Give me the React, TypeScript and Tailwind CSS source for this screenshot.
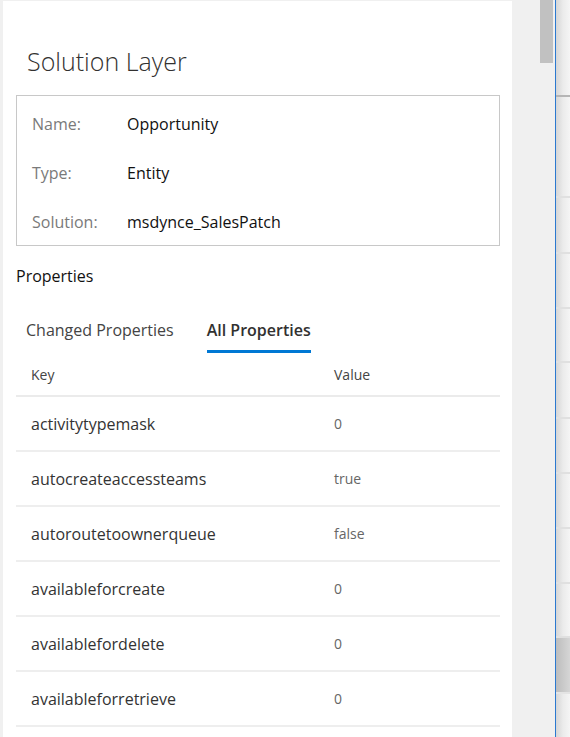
import React from "react";

const info = [
  { label: "Name:", value: "Opportunity" },
  { label: "Type:", value: "Entity" },
  { label: "Solution:", value: "msdynce_SalesPatch" },
];

const props = [
  { key: "activitytypemask", value: "0" },
  { key: "autocreateaccessteams", value: "true" },
  { key: "autoroutetoownerqueue", value: "false" },
  { key: "availableforcreate", value: "0" },
  { key: "availablefordelete", value: "0" },
  { key: "availableforretrieve", value: "0" },
];

// rows of the grid peeking out behind the panel
const backRows = [97, 101, 56, 55, 54, 56, 55, 55, 55, 54, 56, 55];

export default function App() {
  return (
    <div
      className="w-[570px] h-[737px] bg-[#f0f0f0] flex overflow-hidden"
      style={{ fontFamily: '"Open Sans", "Noto Sans", sans-serif' }}
    >
      {/* Panel */}
      <div className="ml-[3px] mt-[1px] w-[509px] bg-white px-[13px] overflow-hidden">
        <h1 className="pl-[11px] pt-[40px] text-[25px] font-light text-[#323130] leading-[40px]">
          Solution Layer
        </h1>

        <div className="mt-[14px] w-[484px] h-[151px] border border-[#c8c8c8] px-[15px] pt-[3px]">
          {info.map((row) => (
            <div key={row.label} className="flex items-center h-[49px] text-[16px]">
              <span className="w-[95px] text-[#7a7a7a]">{row.label}</span>
              <span className="text-[#111]">{row.value}</span>
            </div>
          ))}
        </div>

        <div className="mt-[18px] text-[16px] text-[#111] leading-[24px]">Properties</div>

        <div className="mt-[28px] flex gap-[33px] pl-[10px] text-[16px]">
          <div className="h-[43px] pt-[2px] text-[#444]">Changed Properties</div>
          <div className="h-[43px] pt-[2px] font-semibold text-[#323130] relative">
            All Properties
            <div className="absolute left-0 right-0 top-[34px] h-[3px] bg-[#0078d4]" />
          </div>
        </div>

        <div className="w-[484px]">
          <div className="flex h-[38px] pb-[5px] items-center text-[14px] text-[#444] border-b-2 border-[#ebebeb]">
            <span className="pl-[15px] w-[318px]">Key</span>
            <span>Value</span>
          </div>
          {props.map((p) => (
            <div
              key={p.key}
              className="flex h-[55px] items-center border-b-2 border-[#eeeeee]"
            >
              <span className="pl-[15px] w-[318px] text-[16px] text-[#333]">{p.key}</span>
              <span className="text-[14px] text-[#666]">{p.value}</span>
            </div>
          ))}
        </div>
      </div>

      {/* Scrollbar track */}
      <div className="w-[43px] flex justify-end pr-[2px]">
        <div className="w-[13px] h-[63px] bg-[#c1c1c1]" />
      </div>

      {/* Blue edge */}
      <div className="w-px bg-[#2b79d0]" />

      {/* Grid behind the panel */}
      <div className="flex-1 bg-gradient-to-r from-[#d6d6d6] via-[#ebebeb] to-[#f5f5f5] flex flex-col">
        {backRows.map((h, i) => (
          <div
            key={i}
            className={
              i === 10
                ? "shrink-0 bg-gradient-to-r from-[#bdbdbd] to-[#d6d6d6] border-b-2 border-[#e4e4e4]"
                : i === 0
                ? "shrink-0 border-b-2 border-[#b5b5b5]"
                : "shrink-0 border-b-2 border-[#e0e0e0]"
            }
            style={{ height: h }}
          />
        ))}
      </div>
    </div>
  );
}
